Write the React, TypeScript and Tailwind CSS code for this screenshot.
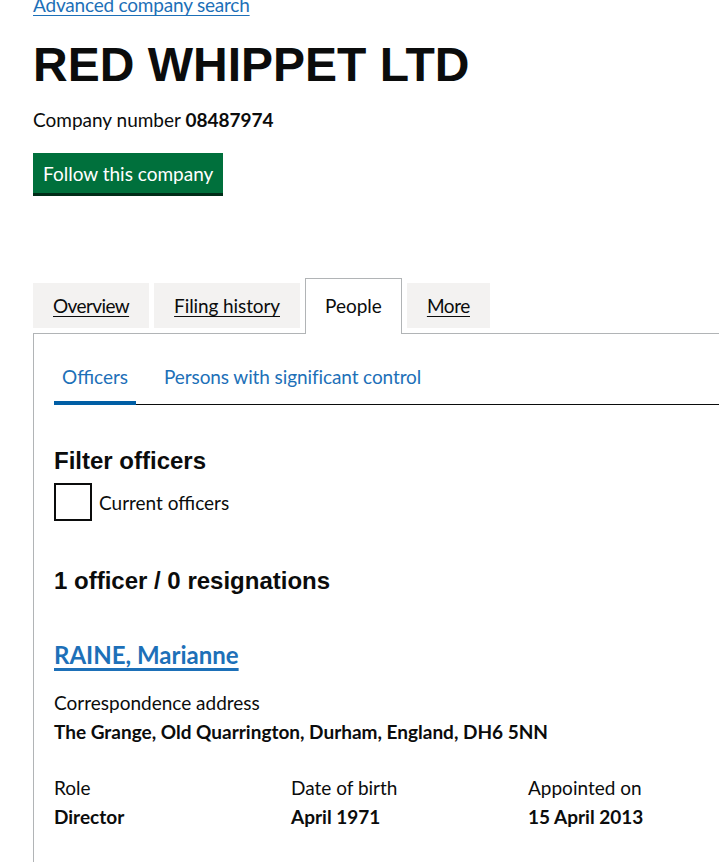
import React from 'react';

const body = { fontFamily: 'Lato, "Noto Sans", Arial, sans-serif' };
const head = { fontFamily: '"Liberation Sans", Arial, sans-serif' };

const tabs = [
  { label: 'Overview', active: false, tracking: 'tracking-[-0.6px]' },
  { label: 'Filing history', active: false, tracking: 'tracking-[-0.1px]' },
  { label: 'People', active: true, tracking: '' },
  { label: 'More', active: false, tracking: 'tracking-[-0.4px]' },
];

export default function App() {
  return (
    <div className="w-[719px] h-[862px] overflow-hidden bg-white text-[#0b0c0c]" style={body}>
      <div className="pl-[33px]">
        <a
          href="#"
          className="-mt-[8px] block w-fit text-[19px] leading-[25px] tracking-[-0.2px] text-[#1d70b8] underline underline-offset-[3px] decoration-1"
        >
          Advanced company search
        </a>

        <h1 className="mt-[23px] text-[48px] leading-[50px] font-bold" style={head}>
          RED WHIPPET LTD
        </h1>

        <p className="mt-[17px] text-[19px] leading-[25px]">
          Company number <strong className="font-bold">08487974</strong>
        </p>

        <button className="mt-[21px] block bg-[#00703c] px-[10px] pt-[8px] pb-[7px] text-[19px] leading-[25px] text-white shadow-[0_3px_0_#002d18]">
          Follow this company
        </button>

        <div className="mt-[90px] w-[900px]">
          <ul className="flex items-start">
            {tabs.map((t) =>
              t.active ? (
                <li
                  key={t.label}
                  className="relative z-10 -mt-[5px] mr-[5px] -mb-px border border-b-0 border-[#b1b4b6] bg-white px-[19px] pt-[14px] pb-[16px] text-[19px] leading-[25px]"
                >
                  {t.label}
                </li>
              ) : (
                <li
                  key={t.label}
                  className={`mr-[5px] bg-[#f3f2f1] px-[20px] py-[10px] text-[19px] leading-[25px] ${t.tracking}`}
                >
                  <a href="#" className="underline underline-offset-[3px] decoration-1">
                    {t.label}
                  </a>
                </li>
              )
            )}
          </ul>

          <div className="border border-[#b1b4b6] px-[20px] pt-[30px] pb-[40px]">
            <ul className="flex border-b border-[#0b0c0c] w-[900px]">
              <li className="-mb-px border-b-4 border-[#005ea5] px-[8px] pb-[12px] text-[19px] leading-[25px] text-[#1d70b8]">
                Officers
              </li>
              <li className="ml-[20px] px-[8px] pb-[12px] text-[19px] leading-[25px] tracking-[-0.1px] text-[#1d70b8]">
                Persons with significant control
              </li>
            </ul>

            <h2 className="mt-[41px] text-[24px] leading-[30px] font-bold" style={head}>
              Filter officers
            </h2>

            <label className="mt-[7px] flex items-center gap-[7px]">
              <span className="block h-[38px] w-[38px] border-2 border-[#0b0c0c]" />
              <span className="text-[19px] leading-[25px]">Current officers</span>
            </label>

            <h2 className="mt-[45px] text-[24px] leading-[30px] font-bold" style={head}>
              1 officer / 0 resignations
            </h2>

            <h2 className="mt-[44px] text-[24px] leading-[30px] font-bold">
              <a href="#" className="text-[#1d70b8] underline underline-offset-[4px] decoration-[3px]">
                RAINE, Marianne
              </a>
            </h2>

            <div className="mt-[20px] text-[19px] leading-[25px]">Correspondence address</div>
            <div className="mt-[4px] text-[19px] leading-[25px] font-bold">
              The Grange, Old Quarrington, Durham, England, DH6 5NN
            </div>

            <div className="mt-[31px] grid grid-cols-[237px_237px_237px]">
              {[
                ['Role', 'Director'],
                ['Date of birth', 'April 1971'],
                ['Appointed on', '15 April 2013'],
              ].map(([k, v]) => (
                <div key={k}>
                  <div className="text-[19px] leading-[25px]">{k}</div>
                  <div className="mt-[4px] text-[19px] leading-[25px] font-bold">{v}</div>
                </div>
              ))}
            </div>
          </div>
        </div>
      </div>
    </div>
  );
}
